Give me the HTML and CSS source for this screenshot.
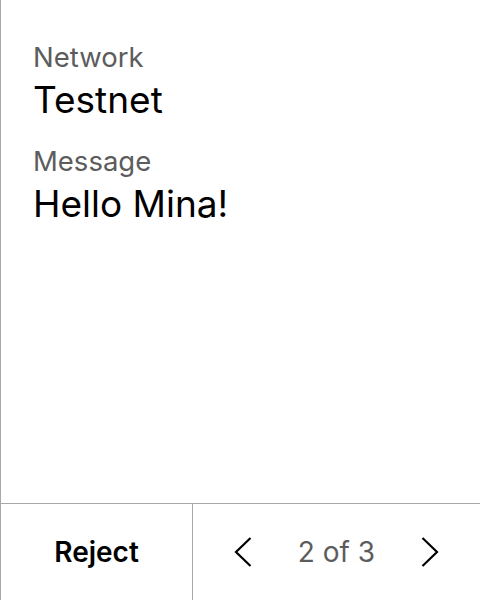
FILE: index.html
```html
<!DOCTYPE html>
<html>
<head>
<meta charset="utf-8">
<link rel="stylesheet" href="styles.css">
</head>
<body>
<div class="screen">
  <main class="content">
    <div class="field">
      <div class="label">Network</div>
      <div class="value">Testnet</div>
    </div>
    <div class="field">
      <div class="label">Message</div>
      <div class="value">Hello Mina!</div>
    </div>
  </main>
  <footer class="actions">
    <div class="reject">Reject</div>
    <div class="pager">
      <svg class="chev" width="18" height="30" viewBox="0 0 18 30"><polyline points="16.5,1 2,15 16.5,29" fill="none" stroke="#000" stroke-width="2.2"/></svg>
      <span class="count">2 of 3</span>
      <svg class="chev" width="18" height="30" viewBox="0 0 18 30"><polyline points="1.5,1 16,15 1.5,29" fill="none" stroke="#000" stroke-width="2.2"/></svg>
    </div>
  </footer>
</div>
</body>
</html>
```
FILE: styles.css
```css
html, body {
  margin: 0;
  padding: 0;
  background: #fff;
}
body {
  font-family: Inter, "Noto Sans", sans-serif;
  color: #000;
}
.screen {
  width: 480px;
  height: 600px;
  box-sizing: border-box;
  border-left: 1px solid #a8a8a8;
  display: flex;
  flex-direction: column;
}
.content {
  flex: 1;
  padding: 39px 0 0 32px;
  display: flex;
  flex-direction: column;
  gap: 19px;
}
.label {
  font-size: 27.5px;
  line-height: 36px;
  color: #5c5c5c;
}
.value {
  margin-top: 1px;
  font-size: 37px;
  line-height: 48px;
  color: #000;
}
.actions {
  height: 96px;
  border-top: 1px solid #a8a8a8;
  display: flex;
}
.reject {
  width: 191px;
  border-right: 1px solid #a8a8a8;
  display: flex;
  align-items: center;
  justify-content: center;
  font-size: 28px;
  font-weight: 600;
}
.pager {
  flex: 1;
  display: flex;
  align-items: center;
  justify-content: space-between;
  padding: 0 41px 0 41px;
}
.count {
  font-size: 28px;
  color: #5c5c5c;
}
.chev {
  display: block;
}
```
